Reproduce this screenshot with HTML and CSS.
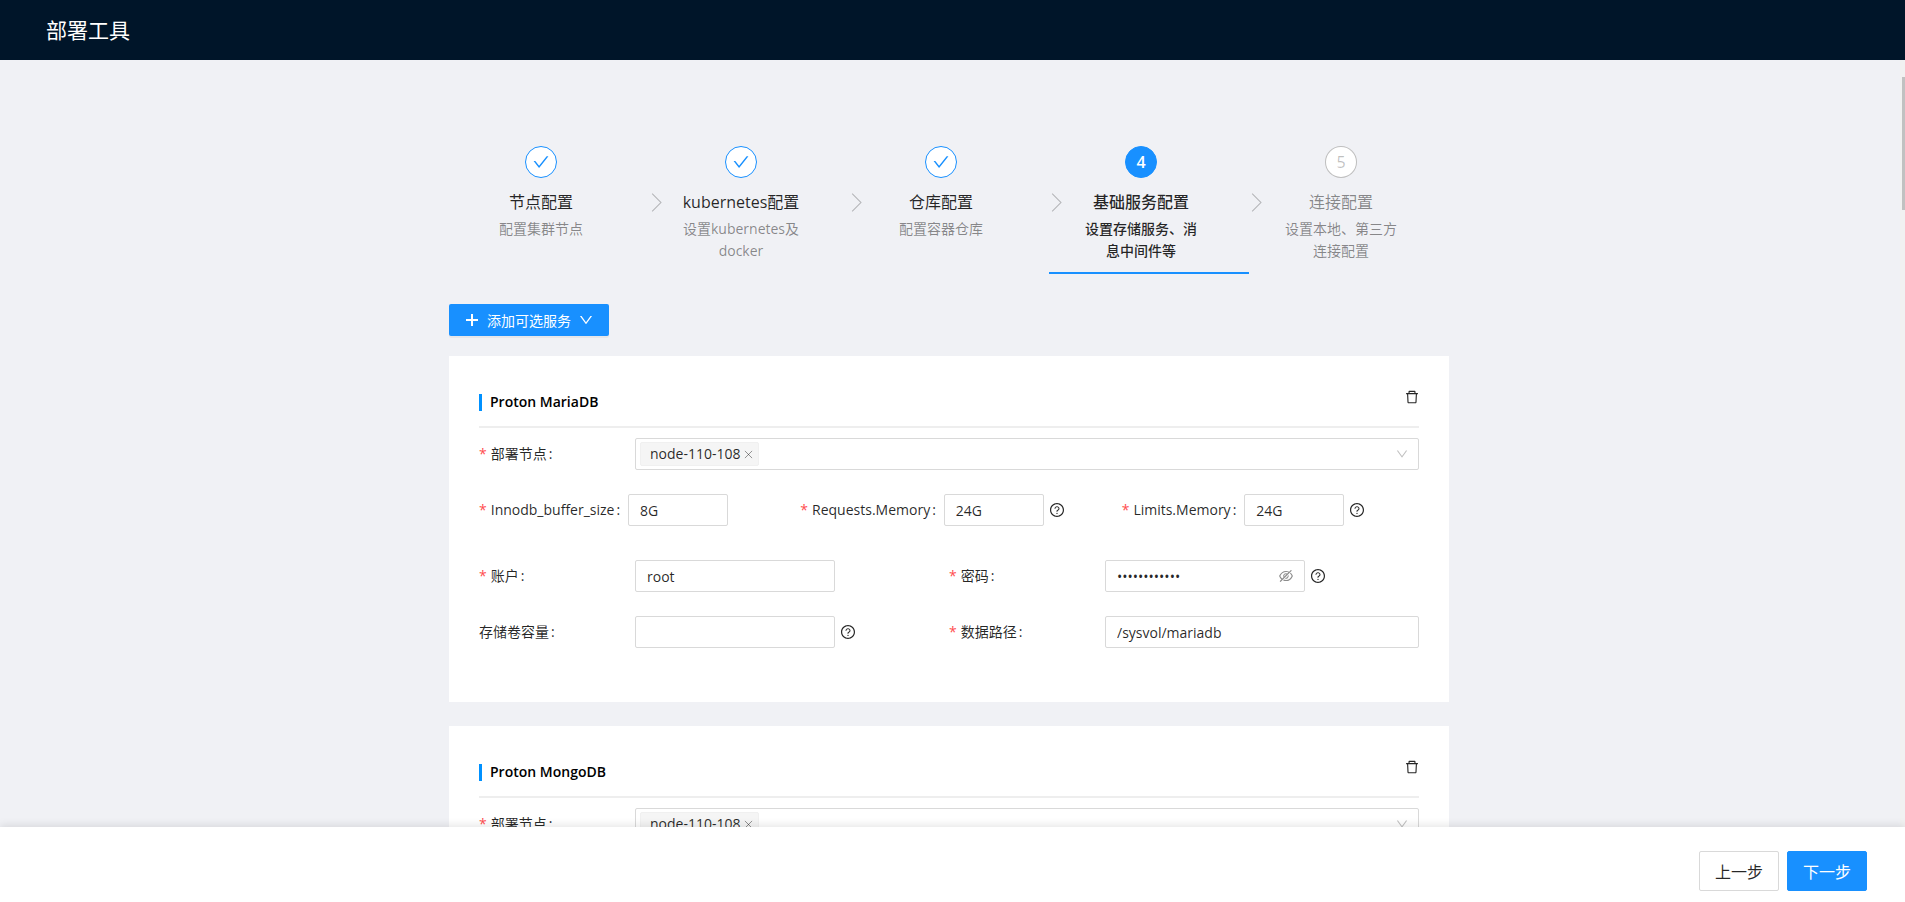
FILE: index.html
```
<!DOCTYPE html>
<html lang="zh-CN">
<head>
  <meta charset="UTF-8">
  <meta name="viewport" content="width=device-width, initial-scale=1.0">
  <title>部署工具</title>
  <link rel="stylesheet" href="styles.css">
</head>
<body>

  <!-- 图标 -->
  <svg class="icon-defs" aria-hidden="true">
    <symbol id="icon-check" viewBox="64 64 896 896"><path d="M912 190h-69.9c-9.8 0-19.1 4.5-25.1 12.2L404.7 724.5 207 474a32 32 0 00-25.1-12.2H112c-6.7 0-10.4 7.7-6.3 12.9l273.9 347c12.8 16.2 37.4 16.2 50.3 0l488.4-618.9c4.1-5.1.4-12.8-6.3-12.8z"/></symbol>
    <symbol id="icon-plus" viewBox="0 0 14 14"><path d="M7 1v12M1 7h12" fill="none" stroke="currentColor" stroke-width="2"/></symbol>
    <symbol id="icon-down" viewBox="64 64 896 896"><path d="M884 256h-75c-5.1 0-9.9 2.5-12.9 6.6L512 654.2 227.9 262.6c-3-4.1-7.8-6.6-12.9-6.6h-75c-6.5 0-10.3 7.4-6.5 12.7l352.6 486.1c12.8 17.6 39 17.6 51.7 0l352.6-486.1c3.9-5.3.1-12.7-6.4-12.7z"/></symbol>
    <symbol id="icon-close" viewBox="0 0 10 10"><path d="M1 1l8 8M9 1L1 9" fill="none" stroke="currentColor"/></symbol>
    <symbol id="icon-delete" viewBox="64 64 896 896"><path d="M360 184h-8c4.4 0 8-3.6 8-8v8h304v-8c0 4.4 3.6 8 8 8h-8v72h72v-80c0-35.3-28.7-64-64-64H352c-35.3 0-64 28.7-64 64v80h72v-72zm504 72H160c-17.7 0-32 14.3-32 32v32c0 4.4 3.6 8 8 8h60.4l24.7 523c1.6 34.1 29.8 61 63.9 61h454c34.2 0 62.3-26.8 63.9-61l24.7-523H888c4.4 0 8-3.6 8-8v-32c0-17.7-14.3-32-32-32zM731.3 840H292.7l-24.2-512h487l-24.2 512z"/></symbol>
    <symbol id="icon-help" viewBox="64 64 896 896"><path d="M512 64C264.6 64 64 264.6 64 512s200.6 448 448 448 448-200.6 448-448S759.4 64 512 64zm0 820c-205.4 0-372-166.6-372-372s166.6-372 372-372 372 166.6 372 372-166.6 372-372 372z"/><path d="M623.6 316.7C593.6 290.4 554 276 512 276s-81.6 14.5-111.6 40.7C369.2 344 352 380.7 352 420v7.6c0 4.4 3.6 8 8 8h48c4.4 0 8-3.6 8-8V420c0-44.1 43.1-80 96-80s96 35.9 96 80c0 31.1-22 59.6-56.1 72.7-21.2 8.1-39.2 22.3-52.1 40.9-13.1 19-19.9 41.8-19.9 64.9V620c0 4.4 3.6 8 8 8h48c4.4 0 8-3.6 8-8v-22.7a48.3 48.3 0 0130.9-44.8c59-22.7 97.1-74.7 97.1-132.5.1-39.3-17.1-76-48.3-103.3zM472 732a40 40 0 1080 0 40 40 0 10-80 0z"/></symbol>
    <symbol id="icon-eye" viewBox="64 64 896 896"><path d="M942.2 486.2Q889.47 375.11 816.7 305l-50.88 50.88C807.31 395.53 843.45 447.4 874.7 512 791.5 684.2 673.4 766 512 766q-72.67 0-133.87-22.38L323 798.75Q408 838 512 838q288.3 0 430.2-300.3a60.29 60.29 0 000-51.5zm-63.57-320.64L836 122.88a8 8 0 00-11.32 0L715.31 232.2Q624.86 186 512 186q-288.3 0-430.2 300.3a60.3 60.3 0 000 51.5q56.69 119.4 136.5 191.41L112.48 835a8 8 0 000 11.31L155.17 889a8 8 0 0011.31 0l712.15-712.12a8 8 0 000-11.32zM149.3 512C232.6 339.8 350.7 258 512 258c54.54 0 104.13 9.36 149.12 28.39l-70.3 70.3a176 176 0 00-238.13 238.13l-83.42 83.42C223.1 637.49 183.3 582.28 149.3 512zm246.7 0a112.11 112.11 0 01146.2-106.69L401.31 546.2A112 112 0 01396 512z"/><path d="M508 624c-3.46 0-6.87-.16-10.25-.47l-52.82 52.82a176.09 176.09 0 00227.42-227.42l-52.82 52.82c.31 3.38.47 6.79.47 10.25a111.94 111.94 0 01-112 112z"/></symbol>
  </svg>

  <header class="header">
    <h1>部署工具</h1>
  </header>

  <div class="scroll-area">
    <main class="content">
      <div class="container">

        <!-- 步骤条 -->
        <ol class="steps">
          <li class="step finish">
            <span class="step-icon"><svg class="icon"><use href="#icon-check"/></svg></span>
            <div class="step-title">节点配置</div>
            <div class="step-desc">配置集群节点</div>
          </li>
          <li class="step finish">
            <span class="step-icon"><svg class="icon"><use href="#icon-check"/></svg></span>
            <div class="step-title">kubernetes配置</div>
            <div class="step-desc">设置kubernetes及docker</div>
          </li>
          <li class="step finish">
            <span class="step-icon"><svg class="icon"><use href="#icon-check"/></svg></span>
            <div class="step-title">仓库配置</div>
            <div class="step-desc">配置容器仓库</div>
          </li>
          <li class="step active">
            <span class="step-icon">4</span>
            <div class="step-title">基础服务配置</div>
            <div class="step-desc">设置存储服务、消息中间件等</div>
          </li>
          <li class="step wait">
            <span class="step-icon">5</span>
            <div class="step-title">连接配置</div>
            <div class="step-desc">设置本地、第三方连接配置</div>
          </li>
        </ol>

        <button type="button" class="btn-add">
          <svg class="icon"><use href="#icon-plus"/></svg>
          <span>添加可选服务</span>
          <svg class="icon"><use href="#icon-down"/></svg>
        </button>

        <!-- Proton MariaDB -->
        <section class="card">
          <div class="card-head">
            <h2>Proton MariaDB</h2>
            <button type="button" class="icon-btn" aria-label="删除"><svg class="icon"><use href="#icon-delete"/></svg></button>
          </div>

          <div class="row">
            <div class="field">
              <label class="required" for="mariadb-node">部署节点</label>
              <div class="multi-select">
                <select id="mariadb-node">
                  <option value="" selected></option>
                  <option value="node-110-108">node-110-108</option>
                </select>
                <span class="tag">node-110-108<button type="button" class="tag-close" aria-label="移除"><svg><use href="#icon-close"/></svg></button></span>
                <svg class="icon arrow"><use href="#icon-down"/></svg>
              </div>
            </div>
          </div>

          <div class="row row-resource">
            <div class="field compact">
              <label class="required" for="buffer-size">Innodb_buffer_size</label>
              <input type="text" id="buffer-size" value="8G">
            </div>
            <div class="field compact">
              <label class="required" for="requests-memory">Requests.Memory</label>
              <input type="text" id="requests-memory" value="24G">
              <svg class="icon help"><use href="#icon-help"/></svg>
            </div>
            <div class="field compact">
              <label class="required" for="limits-memory">Limits.Memory</label>
              <input type="text" id="limits-memory" value="24G">
              <svg class="icon help"><use href="#icon-help"/></svg>
            </div>
          </div>

          <div class="row row-half">
            <div class="field">
              <label class="required" for="account">账户</label>
              <input type="text" id="account" class="input-md" value="root">
            </div>
            <div class="field">
              <label class="required" for="password">密码</label>
              <div class="password input-md">
                <input type="password" id="password" value="mariadb12345">
                <button type="button" class="icon-btn" aria-label="显示密码"><svg class="icon"><use href="#icon-eye"/></svg></button>
              </div>
              <svg class="icon help"><use href="#icon-help"/></svg>
            </div>
            <div class="field">
              <label for="volume">存储卷容量</label>
              <input type="text" id="volume" class="input-md">
              <svg class="icon help"><use href="#icon-help"/></svg>
            </div>
            <div class="field">
              <label class="required" for="data-path">数据路径</label>
              <input type="text" id="data-path" class="input-full" value="/sysvol/mariadb">
            </div>
          </div>
        </section>

        <!-- Proton MongoDB -->
        <section class="card">
          <div class="card-head">
            <h2>Proton MongoDB</h2>
            <button type="button" class="icon-btn" aria-label="删除"><svg class="icon"><use href="#icon-delete"/></svg></button>
          </div>

          <div class="row">
            <div class="field">
              <label class="required" for="mongodb-node">部署节点</label>
              <div class="multi-select">
                <select id="mongodb-node">
                  <option value="" selected></option>
                  <option value="node-110-108">node-110-108</option>
                </select>
                <span class="tag">node-110-108<button type="button" class="tag-close" aria-label="移除"><svg><use href="#icon-close"/></svg></button></span>
                <svg class="icon arrow"><use href="#icon-down"/></svg>
              </div>
            </div>
          </div>
        </section>

      </div>
    </main>
    <div class="scrollbar"><div class="thumb"></div></div>
  </div>

  <footer class="footer">
    <button type="button" class="btn">上一步</button>
    <button type="button" class="btn btn-primary">下一步</button>
  </footer>

</body>
</html>
```
FILE: styles.css
```
* {
  box-sizing: border-box;
}

body {
  margin: 0;
  height: 100vh;
  display: flex;
  flex-direction: column;
  font-family: "Open Sans", "Noto Sans CJK SC", sans-serif;
  font-size: 14px;
  line-height: 22px;
  color: rgba(0, 0, 0, 0.85);
  background-color: #f0f1f5;
}

button,
input,
select {
  font-family: inherit;
  font-size: inherit;
  color: inherit;
}

button {
  cursor: pointer;
}

.icon-defs {
  display: none;
}

.icon {
  flex: none;
  display: block;
  width: 14px;
  height: 14px;
  fill: currentColor;
}

/* 顶部 */
.header {
  flex: none;
  height: 60px;
  padding: 0 46px;
  display: flex;
  align-items: center;
  background-color: #001529;
}

.header h1 {
  margin: 0;
  font-size: 21px;
  font-weight: 400;
  color: #fff;
}

/* 滚动区域 */
.scroll-area {
  flex: 1;
  min-height: 0;
  display: flex;
}

.content {
  flex: 1;
  overflow-y: auto;
  scrollbar-width: none;
}

.container {
  max-width: 1000px;
  margin: 0 auto;
  padding: 86px 0 24px;
}

.scrollbar {
  width: 7px;
  padding: 17px 0 0 2px;
  border-left: 2px solid #f0f1f5;
  background-color: #f1f1f1;
}

.thumb {
  height: 133px;
  background-color: #c1c1c1;
}

/* 步骤条 */
.steps {
  list-style: none;
  margin: 0 0 30px;
  padding: 0;
  display: grid;
  grid-template-columns: repeat(5, 1fr);
}

.step {
  position: relative;
  display: flex;
  flex-direction: column;
  align-items: center;
  padding: 0 16px 10px 0;
  border-bottom: 2px solid transparent;
  text-align: center;
}

/* 步骤之间的箭头 */
.step:not(:last-child)::after {
  content: "";
  position: absolute;
  top: 50px;
  right: -10px;
  width: 12px;
  height: 12px;
  border: 1px solid rgba(0, 0, 0, 0.25);
  border-bottom: none;
  border-left: none;
  transform: rotate(45deg);
}

.step-icon {
  width: 32px;
  height: 32px;
  display: flex;
  align-items: center;
  justify-content: center;
  border: 1px solid #1890ff;
  border-radius: 50%;
  background-color: #fff;
  color: #1890ff;
  font-size: 16px;
}

.step-icon .icon {
  width: 16px;
  height: 16px;
}

.step-title {
  margin-top: 12px;
  font-size: 16px;
  line-height: 24px;
}

.step-desc {
  max-width: 120px;
  margin-top: 4px;
  color: rgba(0, 0, 0, 0.45);
}

.active {
  border-bottom-color: #1890ff;
}

.active .step-icon {
  background-color: #1890ff;
  color: #fff;
  font-weight: 600;
}

.active .step-title,
.active .step-desc {
  font-weight: 500;
  color: rgba(0, 0, 0, 0.85);
}

.wait .step-icon {
  border-color: rgba(0, 0, 0, 0.25);
  color: rgba(0, 0, 0, 0.25);
}

.wait .step-title {
  color: rgba(0, 0, 0, 0.45);
}

/* 添加服务 */
.btn-add {
  height: 32px;
  padding: 0 16px;
  display: flex;
  align-items: center;
  gap: 8px;
  border: none;
  border-radius: 2px;
  background-color: #1890ff;
  box-shadow: 0 2px 0 rgba(0, 0, 0, 0.045);
  color: #fff;
}

/* 服务卡片 */
.card {
  margin-top: 20px;
  padding: 30px 30px 54px;
  background-color: #fff;
}

.card + .card {
  margin-top: 24px;
}

.card-head {
  display: flex;
  justify-content: space-between;
  align-items: flex-start;
  margin-bottom: 10px;
  padding: 4px 0 15px;
  border-bottom: 2px solid #eee;
}

.card-head h2 {
  margin: 4px 0 0;
  padding: 0 0 2px 8px;
  border-left: 3px solid #0091ff;
  font-size: 14px;
  font-weight: 600;
  line-height: 15px;
  color: #000;
}

.icon-btn {
  padding: 0;
  border: none;
  background: none;
}

/* 表单 */
.row {
  display: grid;
  gap: 24px 0;
}

.row-resource {
  grid-template-columns: repeat(3, 1fr);
  column-gap: 24px;
  margin: 24px 0 34px;
}

.row-half {
  grid-template-columns: 1fr 1fr;
}

.field {
  display: flex;
  align-items: center;
}

.field label {
  flex: none;
  width: 156px;
}

.field label::after {
  content: ":";
  margin: 0 8px 0 2px;
}

.field.compact label {
  width: auto;
}

.required::before {
  content: "*";
  margin-right: 4px;
  color: #ff4d4f;
}

.field input {
  width: 100px;
  height: 32px;
  padding: 4px 11px;
  border: 1px solid #d9d9d9;
  border-radius: 2px;
  background-color: #fff;
  outline: none;
}

.field input:focus {
  border-color: #40a9ff;
}

.field .input-md {
  width: 200px;
}

.field .input-full {
  flex: 1;
}

.help {
  margin-left: 6px;
}

/* 多选下拉框 */
.multi-select {
  flex: 1;
  display: grid;
  align-items: center;
}

.multi-select > * {
  grid-area: 1 / 1;
}

.multi-select select {
  width: 100%;
  height: 32px;
  border: 1px solid #d9d9d9;
  border-radius: 2px;
  background-color: #fff;
  appearance: none;
  outline: none;
}

.multi-select .arrow {
  justify-self: end;
  width: 12px;
  height: 12px;
  margin-right: 11px;
  color: rgba(0, 0, 0, 0.25);
  pointer-events: none;
}

.tag {
  justify-self: start;
  height: 24px;
  margin-left: 5px;
  padding: 0 5px 0 9px;
  display: flex;
  align-items: center;
  gap: 4px;
  border: 1px solid #f0f0f0;
  border-radius: 2px;
  background-color: #f5f5f5;
}

.tag-close {
  padding: 0;
  border: none;
  background: none;
  color: rgba(0, 0, 0, 0.45);
}

.tag-close svg {
  display: block;
  width: 9px;
  height: 9px;
}

/* 密码框 */
.password {
  display: flex;
  align-items: center;
  padding-right: 11px;
  border: 1px solid #d9d9d9;
  border-radius: 2px;
}

.password input {
  flex: 1;
  min-width: 0;
  height: 30px;
  border: none;
}

.password .icon-btn {
  color: rgba(0, 0, 0, 0.45);
}

/* 底部操作栏 */
.footer {
  flex: none;
  position: relative;
  display: flex;
  justify-content: flex-end;
  gap: 8px;
  padding: 24px 38px 11px;
  background-color: #fff;
  box-shadow: 0 -2px 8px rgba(0, 0, 0, 0.1);
}

.btn {
  width: 80px;
  height: 40px;
  padding: 0;
  border: 1px solid #d9d9d9;
  border-radius: 2px;
  background-color: #fff;
  font-size: 16px;
}

.btn-primary {
  border-color: #1890ff;
  background-color: #1890ff;
  color: #fff;
}
```
